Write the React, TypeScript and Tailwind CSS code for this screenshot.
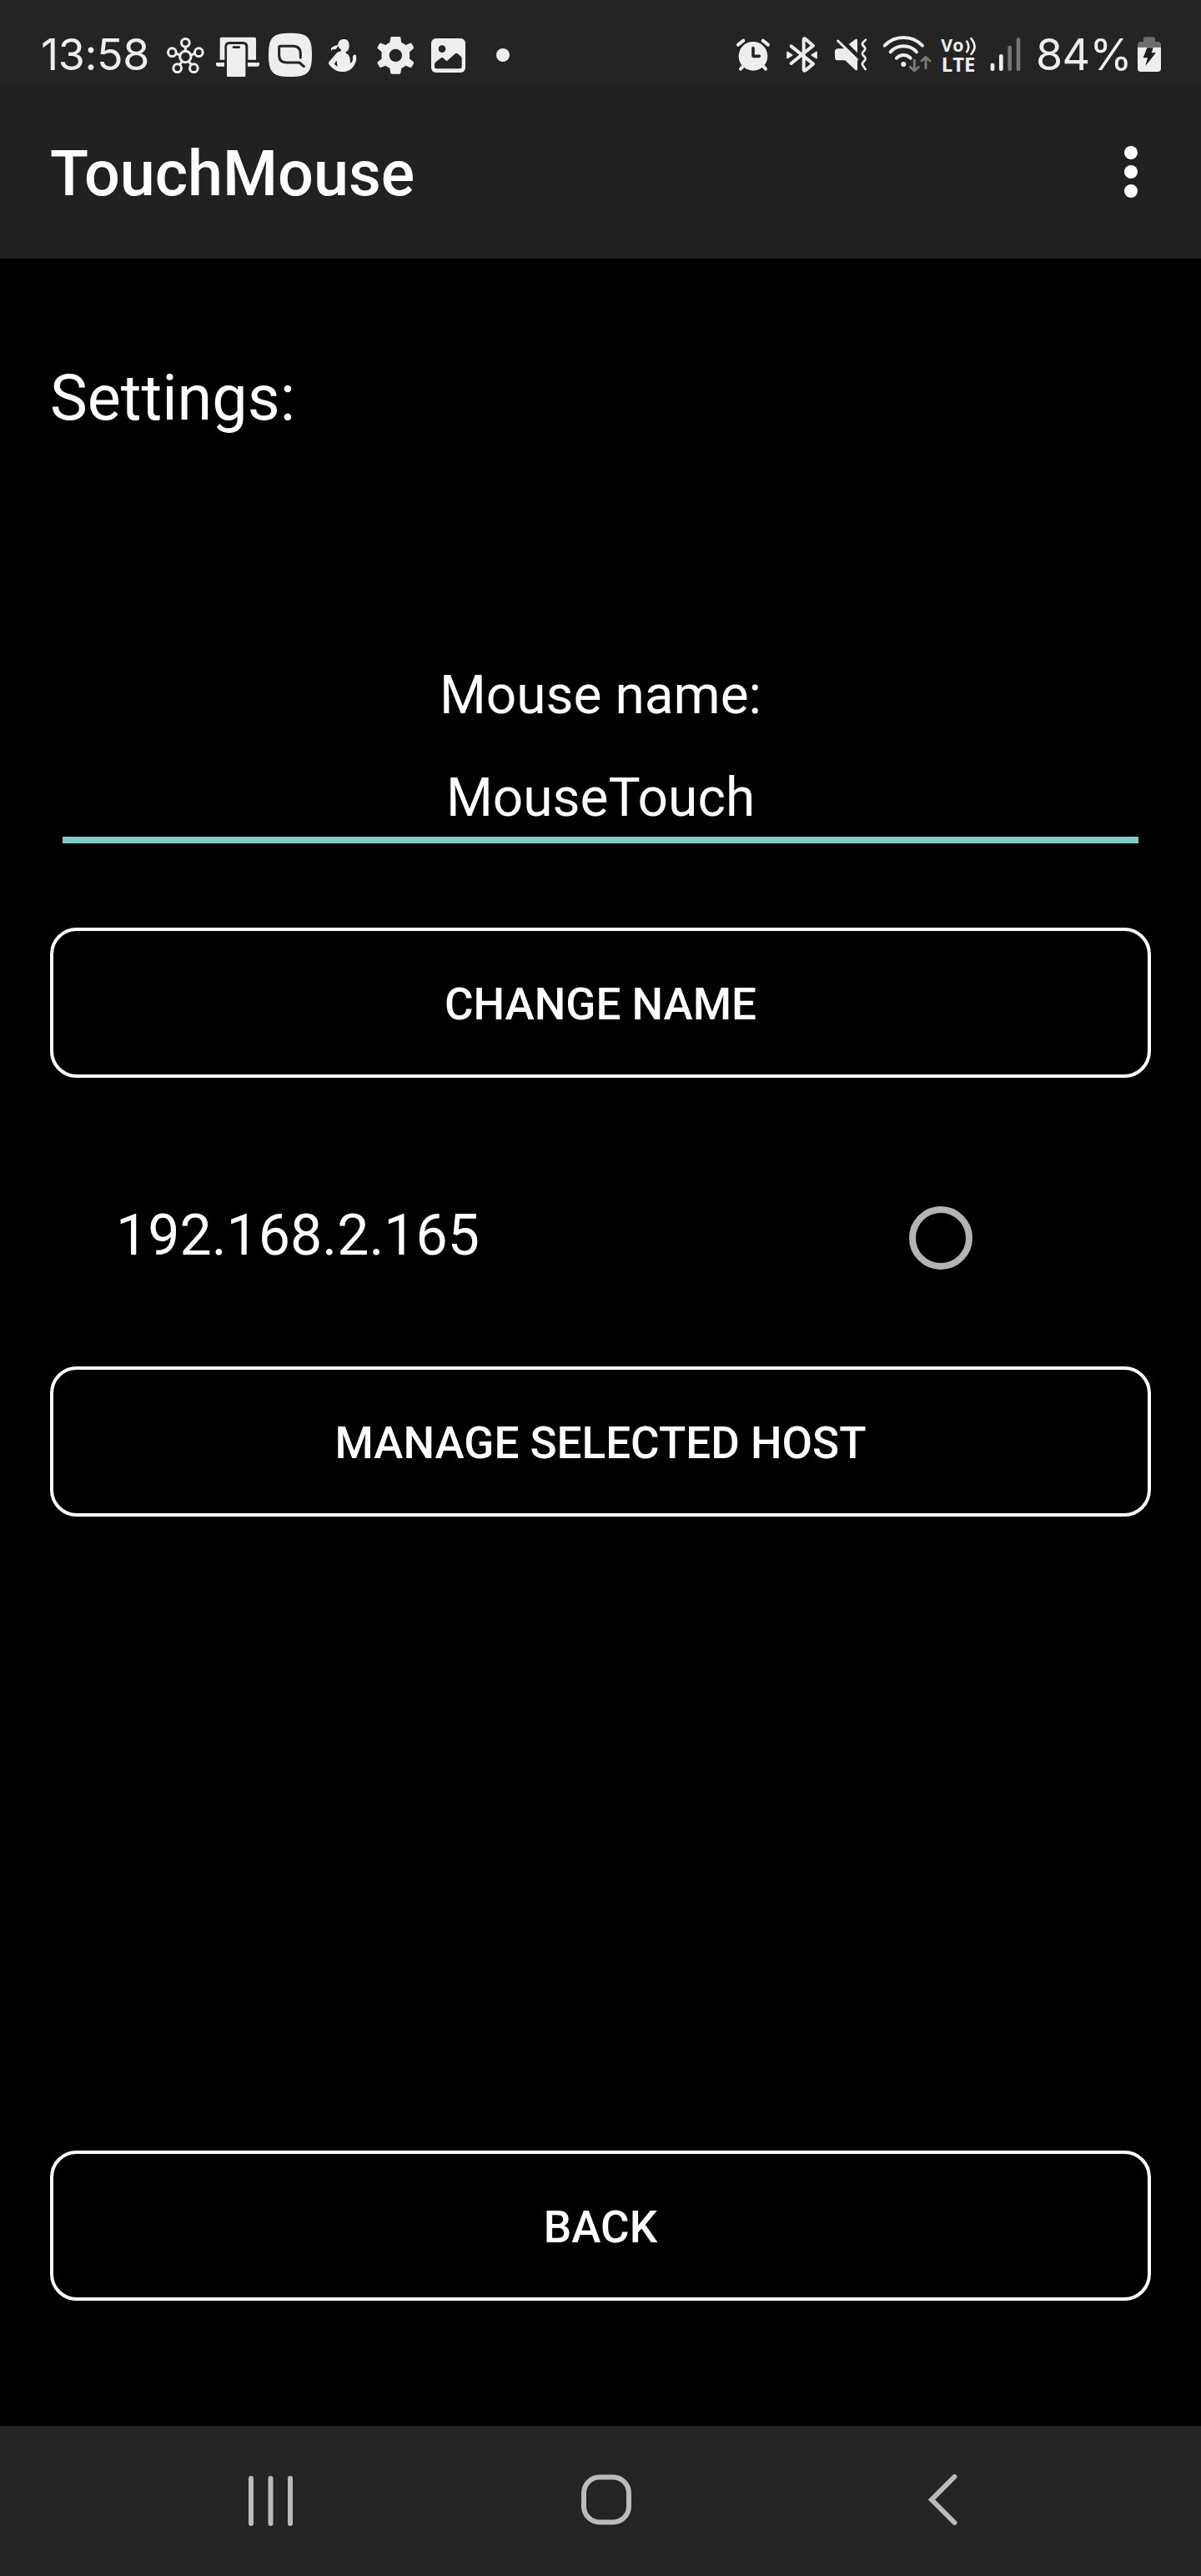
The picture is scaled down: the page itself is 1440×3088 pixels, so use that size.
import type { ReactNode } from "react";

/* Status bar glyphs share one vertical band: 60px tall, drawn at 3 units per pixel. */
function Glyph({ x, w, className, children }: { x: number; w: number; className: string; children: ReactNode }) {
  return (
    <svg
      viewBox={`${x} 48 ${w} 180`}
      className={`h-[60px] shrink-0 overflow-visible ${className}`}
      fill="#eeeeee"
      strokeLinecap="round"
      strokeLinejoin="round"
    >
      {children}
    </svg>
  );
}

function StatusBar() {
  return (
    <div className="flex h-[100px] items-start bg-[#242424] pt-9 pl-[50px] text-[#eeeeee]">
      <div className="w-[150px] shrink-0 font-['Inter'] text-[52px] leading-[60px] tracking-[-0.4px] whitespace-nowrap">
        <span className="-ml-px">13:58</span>
      </div>

      <Glyph x={600} w={135} className="w-[45px]">
        <g fill="none" stroke="#eeeeee" strokeWidth="9">
          <circle cx="667" cy="94" r="14.500" />
          <circle cx="619" cy="128" r="14.500" />
          <circle cx="715" cy="128" r="14.500" />
          <circle cx="638" cy="185" r="14.500" />
          <circle cx="697" cy="185" r="14.500" />
          <circle cx="667" cy="144" r="20" />
          <path d="M667 110v13M634 133l13 5M700 133l-13 5M655 161l-8 11M679 161l9 11" />
        </g>
      </Glyph>

      <Glyph x={777} w={156} className="ml-[14px] w-[52px]">
        <path d="M796 74h120q5 0 5 5v76h-29V108q0-18-18-18h-48q-18 0-18 18v47h-17V79q0-5 5-5z" />
        <path d="M777 165h30v14h-22q-8 0-8-8zM891 165h42v6q0 8-8 8h-34z" />
        <path
          fillRule="evenodd"
          d="M826 99h47q10 0 10 10v103q0 4-4 4h-59q-4 0-4-4V109q0-10 10-10zM839 106q-3 0-3 4t3 4h22q3 0 3-4t-3-4z"
        />
      </Glyph>

      <Glyph x={966} w={156} className="ml-[11px] w-[52px]">
        <path d="M1044 59c62 0 78 14 78 78s-16 79-78 79-78-15-78-79 16-78 78-78z" />
        <path
          d="M1081 147v-13q0-28-28-28h-44q-5 0-5 5v27q0 27 27 27h46l16 14"
          fill="none"
          stroke="#242424"
          strokeWidth="9"
        />
      </Glyph>

      <Glyph x={72} w={102} className="ml-5 w-[34px]">
        <path
          fillRule="evenodd"
          d="M127 81c12 0 19 8 19 21 0 12-3 21-11 24l-2 5c11 3 16 12 16 24l2 13c7-6 9-14 8-22-2-5 4-9 6-8l-1-3 6 3c4 10 1 27-7 38-9 15-24 22-41 22-20 0-36-10-50-28l1-7 29-33c4-4 9-4 15-6l-1-7c-6-3-8-7-9-13-4 6-7 12-12 14l-8-1-5 6-2-8c6-8 16-12 25-13 2-13 9-21 22-21zM101 158l-9 12 12 10z"
        />
      </Glyph>

      <Glyph x={249} w={129} className="ml-[25px] w-[43px]">
        <path
          fillRule="evenodd"
          d="M299 72h28q3 0 4 3l3 18q8 3 15 9l17-7q3-1 5 2l7 13q2 3-1 5l-14 12q1 12 0 24l14 12q3 2 1 5l-7 13q-2 3-5 2l-17-7q-7 6-15 9l-3 18q-1 3-4 3h-28q-3 0-4-3l-3-18q-8-3-15-9l-17 7q-3 1-5-2l-7-13q-2-3 1-5l14-12q-1-12 0-24l-14-12q-3-2-1-5l7-13q2-3 5-2l17 7q7-6 15-9l3-18q1-3 4-3zM313 116a23 23 0 1 0 .1 0z"
        />
      </Glyph>

      <Glyph x={441} w={123} className="ml-[21px] w-[41px]">
        <rect x="441" y="78" width="123" height="123" rx="17" />
        <circle cx="480" cy="116" r="13" fill="#242424" />
        <path
          d="M453 171q0-4 3-7l18-14q6-6 12 0l11 10 29-26q6-6 12 0l10 9q3 3 3 7v30q0 7-7 7h-84q-7 0-7-7z"
          fill="#242424"
        />
      </Glyph>

      <Glyph x={675} w={48} className="ml-[37px] w-4">
        <circle cx="699" cy="138" r="24" />
      </Glyph>

      <div className="ml-auto flex pr-12">
        <Glyph x={69} w={120} className="w-10">
          <circle cx="129" cy="142" r="52" />
          <path
            d="M75 101l19-15M164 86l19 15M92 179l-8 9M166 179l8 9"
            fill="none"
            stroke="#eeeeee"
            strokeWidth="12"
          />
          <path d="M129 113v29h22" fill="none" stroke="#242424" strokeWidth="11" />
        </Glyph>

        <Glyph x={249} w={114} className="ml-5 w-[38px]">
          <path
            d="M266 106l79 64-28 23q-6 4-6-3V83q0-7 6-3l28 24-79 64"
            fill="none"
            stroke="#eeeeee"
            strokeWidth="12"
          />
          <path d="M252 127l17 11-17 11zM357 127l-17 11 17 11z" stroke="#eeeeee" strokeWidth="5" />
        </Glyph>

        <Glyph x={420} w={123} className="ml-[19px] w-[41px]">
          <path d="M434 115h24l46 42v31q0 8-7 4l-37-35h-26q-11 0-11-11v-20q0-11 11-11z" />
          <path d="M473 99l24-18q7-4 7 4v45z" />
          <path d="M434 87l68 67" fill="none" stroke="#eeeeee" strokeWidth="9" />
          <path
            d="M534 83l-11 11q-3 4 0 8l8 9q3 4 0 8l-8 10q-3 4 0 8l9 10q3 4 0 8l-9 11q-3 4 0 8l10 15"
            fill="none"
            stroke="#eeeeee"
            strokeWidth="8"
          />
        </Glyph>

        <Glyph x={594} w={177} className="ml-[17px] w-[59px]">
          <circle cx="670" cy="171" r="9" />
          <path
            d="M602 104a94 94 0 0 1 136 0M623 127a63 63 0 0 1 94 0M645 149a34 34 0 0 1 50 0"
            fill="none"
            stroke="#eeeeee"
            strokeWidth="12"
          />
          <path
            d="M709 156v38M694 181l15 14 15-14M750 185v-40M735 159l15-14 15 14"
            fill="none"
            stroke="#777777"
            strokeWidth="9"
          />
        </Glyph>

        <Glyph x={54} w={129} className="ml-[11px] w-[43px]">
          <text x="55" y="127" fontFamily="Open Sans" fontWeight="700" fontSize="66" textLength="81" lengthAdjust="spacingAndGlyphs">
            Vo
          </text>
          <text x="56" y="198" fontFamily="Open Sans" fontWeight="700" fontSize="71" textLength="122" lengthAdjust="spacingAndGlyphs">
            LTE
          </text>
          <path d="M146 86q16 22 0 43M161 76q29 32 0 61" fill="none" stroke="#eeeeee" strokeWidth="8" strokeLinecap="butt" />
        </Glyph>

        <Glyph x={231} w={111} className="ml-4 w-[37px]">
          <rect x="233" y="167" width="14" height="28" rx="6" />
          <rect x="264" y="135" width="14" height="60" rx="6" />
          <rect x="295" y="104" width="14" height="91" rx="6" fill="#777777" />
          <rect x="326" y="76" width="14" height="119" rx="6" fill="#777777" />
        </Glyph>

        <div className="ml-[18px] w-[122px] font-['Inter'] text-[52px] leading-[60px] tracking-[-0.6px] whitespace-nowrap">
          84%
        </div>

        <Glyph x={762} w={84} className="w-7">
          <path d="M762 110v-8q0-12 12-12h9v-9q0-8 8-8h26q8 0 8 8v9h9q12 0 12 12v8z" fill="#6d6d6d" />
          <path d="M762 110h84v76q0 12-12 12h-60q-12 0-12-12z" />
          <path d="M796 112h22l-6 18h16l-38 47 8-29h-16z" fill="#1c1c1c" />
        </Glyph>
      </div>
    </div>
  );
}

function AppBar() {
  return (
    <header className="flex h-[210px] items-center justify-between bg-[#212121] pr-[76px] pl-[60px]">
      <h1 className="pt-[6px] text-[75.5px] leading-[90px] font-medium">TouchMouse</h1>
      <button aria-label="More options" className="flex w-4 flex-col gap-[7px] pt-px">
        <span className="size-4 rounded-full bg-white" />
        <span className="size-4 rounded-full bg-white" />
        <span className="size-4 rounded-full bg-white" />
      </button>
    </header>
  );
}

function OutlineButton({ children, className = "" }: { children: ReactNode; className?: string }) {
  return (
    <button
      className={`flex h-[180px] w-full shrink-0 items-center justify-center rounded-[32px] border-4 border-white pt-1 text-[53px] leading-[60px] font-medium uppercase ${className}`}
    >
      {children}
    </button>
  );
}

function NavBar() {
  return (
    <nav className="flex h-[180px] items-center bg-[#242424] pl-[294px]">
      <svg viewBox="0 0 60 64" className="h-16 w-[60px]" fill="none" stroke="#bbbbbb" strokeWidth="6" strokeLinecap="round">
        <path d="M7 5v54M30.500 5v54M54 5v54" />
      </svg>
      <svg viewBox="0 0 64 64" className="ml-[341px] h-16 w-16" fill="none" stroke="#bbbbbb" strokeWidth="6">
        <rect x="5" y="3.500" width="54" height="54" rx="19" />
      </svg>
      <svg
        viewBox="0 0 40 64"
        className="ml-[351px] h-16 w-10"
        fill="none"
        stroke="#bbbbbb"
        strokeWidth="6"
        strokeLinecap="round"
      >
        <path d="M34.500 3L7 30.500L34.500 58" />
      </svg>
    </nav>
  );
}

export default function App() {
  return (
    <div className="flex h-[3088px] w-[1440px] flex-col overflow-hidden bg-black font-['Roboto',sans-serif] text-white">
      <StatusBar />
      <AppBar />
      <main className="flex flex-1 flex-col px-[60px] pt-[122px]">
        <h2 className="text-[75.5px] leading-[90px]">Settings:</h2>
        <label htmlFor="mouse-name" className="mt-[272px] text-center text-[64px] leading-[80px]">
          Mouse name:
        </label>
        <input
          id="mouse-name"
          defaultValue="MouseTouch"
          className="mx-[15px] mt-[42px] h-[95px] border-b-8 border-[#80cbc4] bg-transparent pb-[7px] text-center text-[64px] leading-[80px] outline-none"
        />
        <OutlineButton className="mt-[101px]">Change name</OutlineButton>
        <div className="flex h-[346px] items-center justify-between pt-[38px] pr-[214px] pl-[79px]">
          <span className="pb-[6px] text-[68px] leading-[80px]">192.168.2.165</span>
          <span role="radio" aria-checked="false" className="size-[76px] rounded-full border-8 border-[#b3b3b3]" />
        </div>
        <OutlineButton>Manage selected host</OutlineButton>
        <OutlineButton className="mt-[760px]">Back</OutlineButton>
      </main>
      <NavBar />
    </div>
  );
}
